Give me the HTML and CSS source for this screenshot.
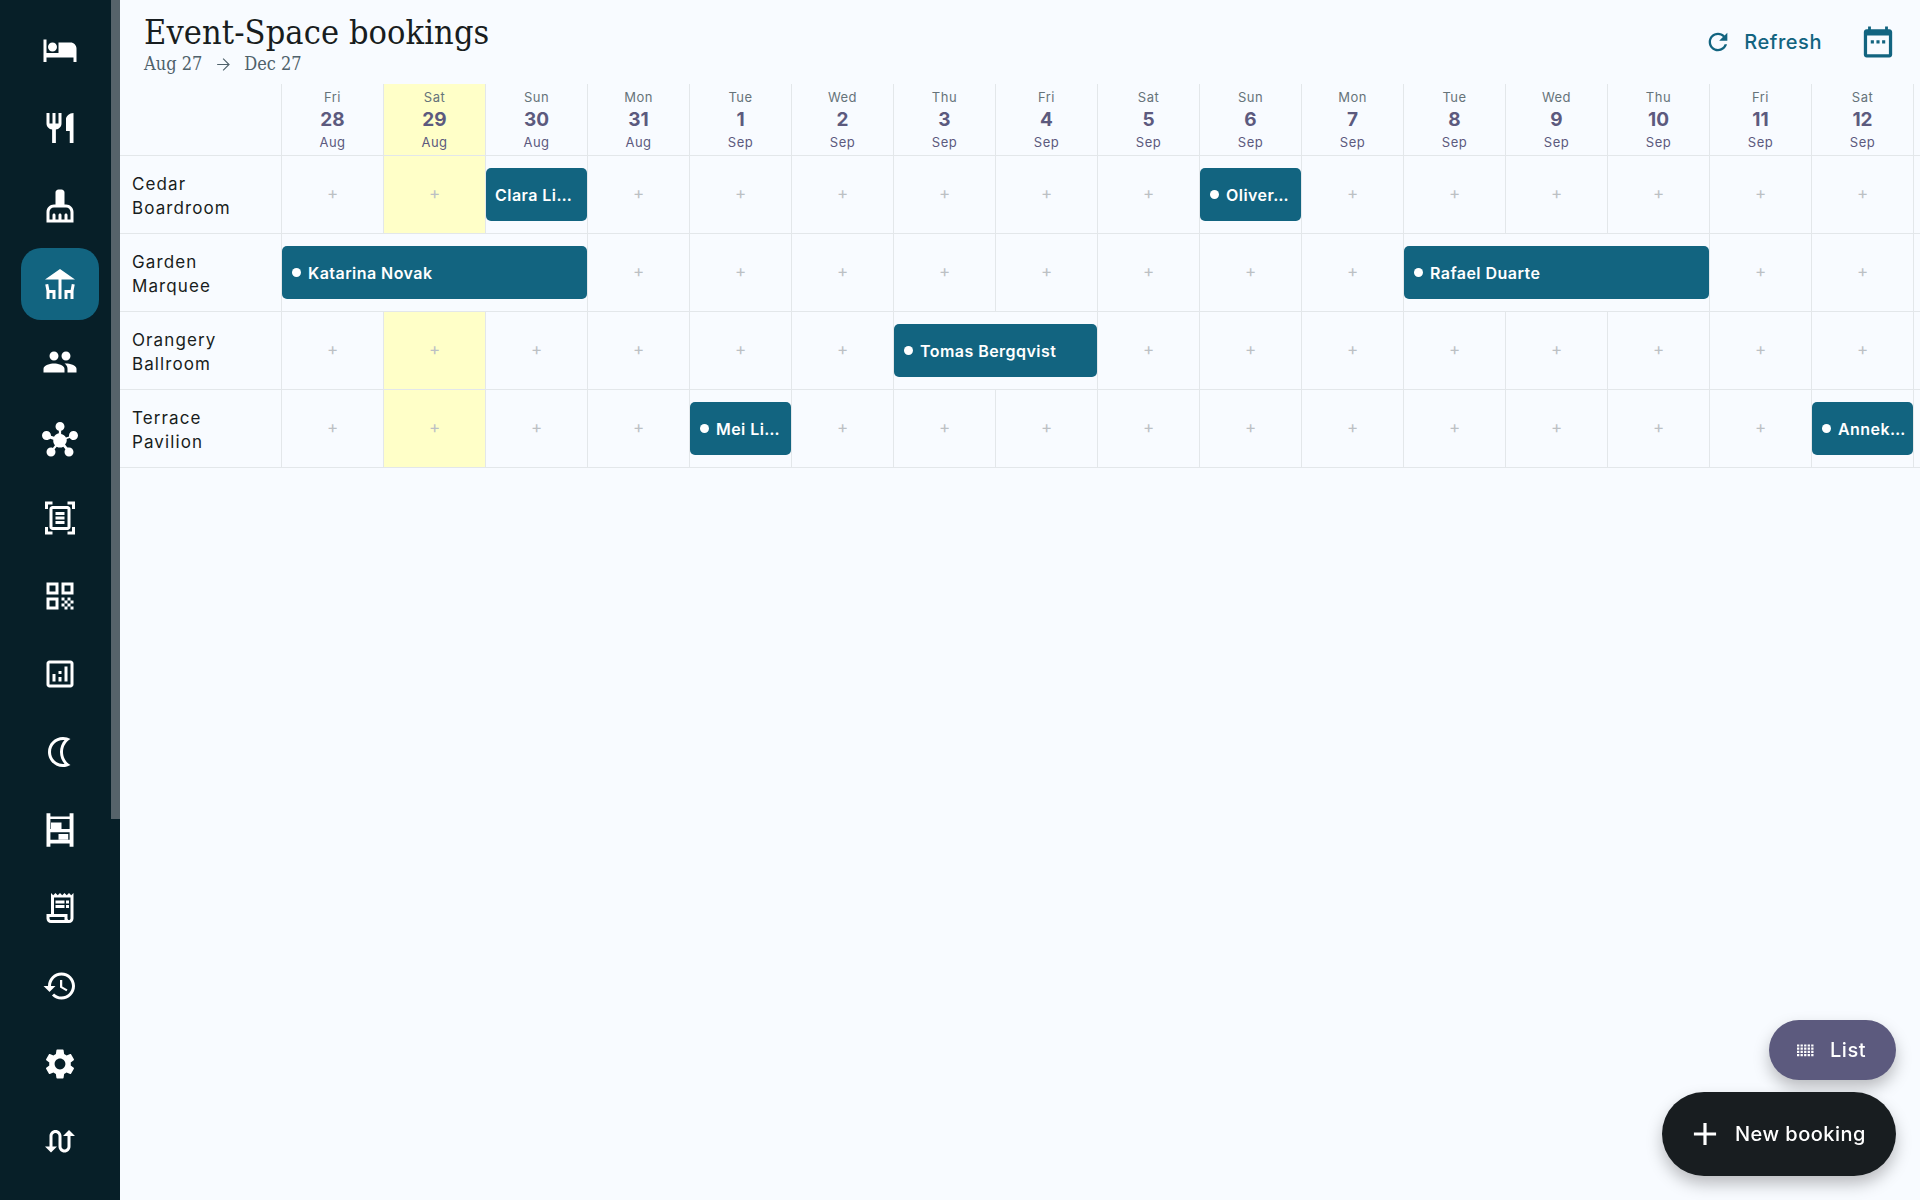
FILE: index.html
```html
<!DOCTYPE html>
<html lang="en">
<head>
    <meta charset="UTF-8">
    <meta name="viewport" content="width=device-width, initial-scale=1.0">
    <title>Event-Space bookings</title>
    <link rel="stylesheet" href="styles.css">
</head>
<body>
    <nav class="sidebar">
        <div class="navItem"><svg class="navIcon" viewBox="0 0 24 24"><path d="M7 13c1.66 0 3-1.34 3-3S8.66 7 7 7s-3 1.34-3 3 1.34 3 3 3zm12-6h-8v7H3V5H1v15h2v-3h18v3h2v-9c0-2.21-1.79-4-4-4z"/></svg></div>
        <div class="navItem"><svg class="navIcon" viewBox="0 0 24 24"><path d="M11 9H9V2H7v7H5V2H3v7c0 2.12 1.66 3.84 3.75 3.97V22h2.5v-9.03C11.34 12.84 13 11.12 13 9V2h-2v7zm5-3v8h2.5v8H21V2c-2.76 0-5 2.24-5 4z"/></svg></div>
        <div class="navItem"><svg class="navIcon" viewBox="0 0 24 24"><path d="M16 11h-1V3c0-1.1-.9-2-2-2h-2c-1.1 0-2 .9-2 2v8H8c-2.76 0-5 2.24-5 5v7h18v-7c0-2.76-2.24-5-5-5zm3 10h-2v-3c0-.55-.45-1-1-1s-1 .45-1 1v3h-2v-3c0-.55-.45-1-1-1s-1 .45-1 1v3H9v-3c0-.55-.45-1-1-1s-1 .45-1 1v3H5v-5c0-1.65 1.35-3 3-3h8c1.65 0 3 1.35 3 3v5z"/></svg></div>
        <div class="navItem active"><svg class="navIcon" viewBox="0 0 24 24"><path d="M22 9L12 2 2 9h9v13h2V9z"/><path d="M4.14 12l-1.96.37.82 4.37V22h2l.02-4H7v4h2v-6H4.9zM19.1 16H15v6h2v-4h1.98l.02 4h2v-5.26l.82-4.37-1.96-.37z"/></svg></div>
        <div class="navItem"><svg class="navIcon" viewBox="0 0 24 24"><path d="M16 11c1.66 0 2.99-1.34 2.99-3S17.66 5 16 5c-1.66 0-3 1.34-3 3s1.34 3 3 3zm-8 0c1.66 0 2.99-1.34 2.99-3S9.66 5 8 5C6.34 5 5 6.34 5 8s1.34 3 3 3zm0 2c-2.33 0-7 1.17-7 3.5V19h14v-2.5c0-2.33-4.67-3.5-7-3.5zm8 0c-.29 0-.62.02-.97.05 1.16.84 1.97 1.97 1.97 3.45V19h6v-2.5c0-2.33-4.67-3.5-7-3.5z"/></svg></div>
        <div class="navItem"><svg class="navIcon" viewBox="0 0 24 24"><path d="M8.4 18.2c.38.5.6 1.12.6 1.8 0 1.66-1.34 3-3 3s-3-1.34-3-3 1.34-3 3-3c.44 0 .85.09 1.23.26l1.41-1.77c-.92-1.03-1.29-2.39-1.09-3.69l-2.03-.68C4.98 11.45 4.06 12 3 12c-1.66 0-3-1.34-3-3s1.34-3 3-3 3 1.34 3 3c0 .07 0 .14-.01.21l2.03.68c.64-1.21 1.82-2.09 3.22-2.32V5.91C9.96 5.57 9 4.4 9 3c0-1.66 1.34-3 3-3s3 1.34 3 3c0 1.4-.96 2.57-2.25 2.91v2.16c1.4.23 2.58 1.11 3.22 2.32l2.03-.68C18 9.14 18 9.07 18 9c0-1.66 1.34-3 3-3s3 1.34 3 3-1.34 3-3 3c-1.06 0-1.98-.55-2.52-1.37l-2.03.68c.2 1.29-.16 2.65-1.09 3.69l1.41 1.77C17.15 17.09 17.56 17 18 17c1.66 0 3 1.34 3 3s-1.34 3-3 3-3-1.34-3-3c0-.68.22-1.3.6-1.8l-1.41-1.77c-1.35.75-3.01.76-4.38 0L8.4 18.2z"/></svg></div>
        <div class="navItem"><svg class="navIcon" viewBox="0 0 24 24"><path d="M7 3H4v3H2V1h5v2zm15 3V1h-5v2h3v3h2zM7 21H4v-3H2v5h5v-2zm13-3v3h-3v2h5v-5h-2zM19 18c0 1.1-.9 2-2 2H7c-1.1 0-2-.9-2-2V6c0-1.1.9-2 2-2h10c1.1 0 2 .9 2 2v12zM17 6H7v12h10V6zM9 8h6v2H9zm0 3h6v2H9zm0 3h6v2H9z"/></svg></div>
        <div class="navItem"><svg class="navIcon" viewBox="0 0 24 24"><path d="M3 11h8V3H3v8zm2-6h4v4H5V5zM3 21h8v-8H3v8zm2-6h4v4H5v-4zM13 3v8h8V3h-8zm6 6h-4V5h4v4zM19 19h2v2h-2zM13 13h2v2h-2zM15 15h2v2h-2zM13 17h2v2h-2zM15 19h2v2h-2zM17 17h2v2h-2zM17 13h2v2h-2zM19 15h2v2h-2z"/></svg></div>
        <div class="navItem"><svg class="navIcon" viewBox="0 0 24 24"><path d="M19 3H5c-1.1 0-2 .9-2 2v14c0 1.1.9 2 2 2h14c1.1 0 2-.9 2-2V5c0-1.1-.9-2-2-2zm0 16H5V5h14v14zM9 17H7v-5h2v5zm4 0h-2v-3h2v3zm0-5h-2v-2h2v2zm4 5h-2V7h2v10z"/></svg></div>
        <div class="navItem"><svg class="navIcon" viewBox="0 0 24 24"><path d="M14 4c.34 0 .68.02 1.01.07C13.1 6.23 12 9.05 12 12s1.1 5.77 3.01 7.93c-.33.05-.67.07-1.01.07-4.41 0-8-3.59-8-8s3.59-8 8-8m0-2C8.48 2 4 6.48 4 12s4.48 10 10 10c1.82 0 3.53-.5 5-1.35-2.99-1.73-5-4.95-5-8.65s2.01-6.92 5-8.65C17.53 2.5 15.82 2 14 2z"/></svg></div>
        <div class="navItem"><svg class="navIcon" viewBox="0 0 24 24"><path d="M3 .8h2.6v2.2h12.8V.8H21v22.4h-2.6V21H5.600v2.200H3zM5.600 4.700v6.600h12.800V4.700zM5.600 13.500v5h12.800v-5z"/><path d="M6 7h7v4.300H6zM11 14.700h6.500v3.800H11z"/></svg></div>
        <div class="navItem"><svg class="navIcon" viewBox="0 0 24 24"><path d="M19.500 3.500L18 2l-1.500 1.500L15 2l-1.500 1.500L12 2l-1.500 1.500L9 2 7.500 3.500 6 2v14H3v3c0 1.660 1.340 3 3 3h12c1.660 0 3-1.340 3-3V2l-1.500 1.500zM15 20H6c-.55 0-1-.45-1-1v-1h10v2zm4-1c0 .55-.45 1-1 1s-1-.45-1-1v-3H8V5h11v14z"/><path d="M9 7h6v2H9zm7 0h2v2h-2zM9 10h6v2H9zm7 0h2v2h-2z"/></svg></div>
        <div class="navItem"><svg class="navIcon" viewBox="0 0 24 24"><path d="M13 3c-4.970 0-9 4.030-9 9H1l3.890 3.890.07.14L9 12H6c0-3.870 3.130-7 7-7s7 3.130 7 7-3.130 7-7 7c-1.930 0-3.680-.79-4.940-2.060l-1.420 1.420C8.270 19.990 10.510 21 13 21c4.970 0 9-4.030 9-9s-4.030-9-9-9zm-1 5v5l4.280 2.540.72-1.210-3.500-2.080V8H12z"/></svg></div>
        <div class="navItem"><svg class="navIcon" viewBox="0 0 24 24"><path d="M19.140 12.940c.04-.3.06-.61.06-.94 0-.32-.02-.64-.07-.94l2.030-1.580c.18-.14.23-.41.12-.61l-1.920-3.320c-.12-.22-.37-.29-.59-.22l-2.390.96c-.5-.38-1.030-.7-1.620-.94l-.36-2.540c-.04-.24-.24-.41-.48-.41h-3.840c-.24 0-.43.17-.47.41l-.36 2.540c-.59.24-1.130.57-1.620.94l-2.390-.96c-.22-.08-.47 0-.59.22L2.740 8.870c-.12.21-.08.47.12.61l2.030 1.580c-.05.3-.09.63-.09.94s.02.64.07.94l-2.030 1.580c-.18.14-.23.41-.12.61l1.920 3.320c.12.22.37.29.59.22l2.390-.96c.5.38 1.030.7 1.620.94l.36 2.540c.05.24.24.41.48.41h3.840c.24 0 .44-.17.47-.41l.36-2.540c.59-.24 1.130-.56 1.620-.94l2.390.96c.22.08.47 0 .59-.22l1.920-3.320c.12-.22.07-.47-.12-.61l-2.010-1.580zM12 15.600c-1.980 0-3.600-1.620-3.600-3.600s1.620-3.600 3.600-3.600 3.600 1.620 3.600 3.600-1.620 3.600-3.600 3.600z"/></svg></div>
        <div class="navItem"><svg class="navIcon" viewBox="0 0 24 24"><path d="M18 4l-4 4h3v7c0 1.100-.9 2-2 2s-2-.9-2-2V8c0-2.210-1.790-4-4-4S5 5.790 5 8v7H2l4 4 4-4H7V8c0-1.100.9-2 2-2s2 .9 2 2v7c0 2.210 1.790 4 4 4s4-1.790 4-4V8h3l-4-4z"/></svg></div>
        <div class="sidebarThumb"></div>
    </nav>

    <main class="content">
        <header class="topBar">
            <div class="heading">
                <h1 class="title">Event-Space bookings</h1>
                <div class="dateRange">
                    <span>Aug 27</span>
                    <svg class="arrowIcon" viewBox="0 0 24 24"><path d="M12 4l-1 1 6.200 6.300H4v1.400h13.200L11 19l1 1 8-8z"/></svg>
                    <span>Dec 27</span>
                </div>
            </div>
            <div class="topActions">
                <div class="refresh">
                    <svg class="refreshIcon" viewBox="0 0 24 24"><path d="M17.650 6.350C16.200 4.900 14.210 4 12 4c-4.420 0-7.990 3.580-7.990 8s3.570 8 7.990 8c3.730 0 6.840-2.550 7.730-6h-2.080c-.82 2.330-3.040 4-5.650 4-3.310 0-6-2.690-6-6s2.690-6 6-6c1.660 0 3.140.69 4.220 1.780L13 11h7V4l-2.350 2.350z"/></svg>
                    <span>Refresh</span>
                </div>
                <svg class="calendarIcon" viewBox="0 0 24 24"><path d="M20 3h-1V1h-2v2H7V1H5v2H4c-1.100 0-2 .9-2 2v16c0 1.100.9 2 2 2h16c1.100 0 2-.9 2-2V5c0-1.100-.9-2-2-2zm-.3 17.600H4.300V7.400h15.400z"/><path d="M6.900 10.800h2.200V13H6.900zm4 0h2.200V13h-2.200zm4 0h2.200V13h-2.200z"/></svg>
            </div>
        </header>

        <div class="schedule">
            <div class="corner"></div>
            <div class="dayHead"><span class="dayName">Fri</span><span class="dayNum">28</span><span class="dayMonth">Aug</span></div>
            <div class="dayHead today"><span class="dayName">Sat</span><span class="dayNum">29</span><span class="dayMonth">Aug</span></div>
            <div class="dayHead"><span class="dayName">Sun</span><span class="dayNum">30</span><span class="dayMonth">Aug</span></div>
            <div class="dayHead"><span class="dayName">Mon</span><span class="dayNum">31</span><span class="dayMonth">Aug</span></div>
            <div class="dayHead"><span class="dayName">Tue</span><span class="dayNum">1</span><span class="dayMonth">Sep</span></div>
            <div class="dayHead"><span class="dayName">Wed</span><span class="dayNum">2</span><span class="dayMonth">Sep</span></div>
            <div class="dayHead"><span class="dayName">Thu</span><span class="dayNum">3</span><span class="dayMonth">Sep</span></div>
            <div class="dayHead"><span class="dayName">Fri</span><span class="dayNum">4</span><span class="dayMonth">Sep</span></div>
            <div class="dayHead"><span class="dayName">Sat</span><span class="dayNum">5</span><span class="dayMonth">Sep</span></div>
            <div class="dayHead"><span class="dayName">Sun</span><span class="dayNum">6</span><span class="dayMonth">Sep</span></div>
            <div class="dayHead"><span class="dayName">Mon</span><span class="dayNum">7</span><span class="dayMonth">Sep</span></div>
            <div class="dayHead"><span class="dayName">Tue</span><span class="dayNum">8</span><span class="dayMonth">Sep</span></div>
            <div class="dayHead"><span class="dayName">Wed</span><span class="dayNum">9</span><span class="dayMonth">Sep</span></div>
            <div class="dayHead"><span class="dayName">Thu</span><span class="dayNum">10</span><span class="dayMonth">Sep</span></div>
            <div class="dayHead"><span class="dayName">Fri</span><span class="dayNum">11</span><span class="dayMonth">Sep</span></div>
            <div class="dayHead"><span class="dayName">Sat</span><span class="dayNum">12</span><span class="dayMonth">Sep</span></div>
            <div class="dayHead"></div>

            <!-- Cedar Boardroom -->
            <div class="room">Cedar<br>Boardroom</div>
            <div class="cell">+</div>
            <div class="cell today">+</div>
            <div class="cell slot"><div class="booking"><span>Clara Li…</span></div></div>
            <div class="cell">+</div>
            <div class="cell">+</div>
            <div class="cell">+</div>
            <div class="cell">+</div>
            <div class="cell">+</div>
            <div class="cell">+</div>
            <div class="cell slot"><div class="booking"><i class="dot"></i><span>Oliver…</span></div></div>
            <div class="cell">+</div>
            <div class="cell">+</div>
            <div class="cell">+</div>
            <div class="cell">+</div>
            <div class="cell">+</div>
            <div class="cell">+</div>
            <div class="cell"></div>

            <!-- Garden Marquee -->
            <div class="room">Garden<br>Marquee</div>
            <div class="cell slot span3"><div class="booking"><i class="dot"></i><span>Katarina Novak</span></div></div>
            <div class="cell">+</div>
            <div class="cell">+</div>
            <div class="cell">+</div>
            <div class="cell">+</div>
            <div class="cell">+</div>
            <div class="cell">+</div>
            <div class="cell">+</div>
            <div class="cell">+</div>
            <div class="cell slot span3"><div class="booking"><i class="dot"></i><span>Rafael Duarte</span></div></div>
            <div class="cell">+</div>
            <div class="cell">+</div>
            <div class="cell"></div>

            <!-- Orangery Ballroom -->
            <div class="room">Orangery<br>Ballroom</div>
            <div class="cell">+</div>
            <div class="cell today">+</div>
            <div class="cell">+</div>
            <div class="cell">+</div>
            <div class="cell">+</div>
            <div class="cell">+</div>
            <div class="cell slot span2"><div class="booking"><i class="dot"></i><span>Tomas Bergqvist</span></div></div>
            <div class="cell">+</div>
            <div class="cell">+</div>
            <div class="cell">+</div>
            <div class="cell">+</div>
            <div class="cell">+</div>
            <div class="cell">+</div>
            <div class="cell">+</div>
            <div class="cell">+</div>
            <div class="cell"></div>

            <!-- Terrace Pavilion -->
            <div class="room">Terrace<br>Pavilion</div>
            <div class="cell">+</div>
            <div class="cell today">+</div>
            <div class="cell">+</div>
            <div class="cell">+</div>
            <div class="cell slot"><div class="booking"><i class="dot"></i><span>Mei Li…</span></div></div>
            <div class="cell">+</div>
            <div class="cell">+</div>
            <div class="cell">+</div>
            <div class="cell">+</div>
            <div class="cell">+</div>
            <div class="cell">+</div>
            <div class="cell">+</div>
            <div class="cell">+</div>
            <div class="cell">+</div>
            <div class="cell">+</div>
            <div class="cell slot"><div class="booking"><i class="dot"></i><span>Annek…</span></div></div>
            <div class="cell"></div>
        </div>
    </main>

    <div class="fabs">
        <div class="fab fabList">
            <svg class="listIcon" viewBox="0 0 17 13"><path d="M0 1.500H17M0 4.700H17M0 7.900H17M0 11.100H17"/></svg>
            <span>List</span>
        </div>
        <div class="fab fabNew">
            <svg class="plusIcon" viewBox="0 0 24 24"><path d="M19 13h-6v6h-2v-6H5v-2h6V5h2v6h6v2z"/></svg>
            <span>New booking</span>
        </div>
    </div>
</body>
</html>
```

FILE: styles.css
```css
body {
    margin: 0;
    padding: 0;
    height: 1200px;
    display: flex;
    overflow: hidden;
    background-color: #f8fbff;
    font-family: Inter, "Liberation Sans", sans-serif;
    color: #181d20;
}

/* sidebar */
.sidebar {
    position: relative;
    flex: 0 0 120px;
    box-sizing: border-box;
    padding-top: 14px;
    background-color: #071f28;
    display: flex;
    flex-direction: column;
    align-items: center;
}
.navItem {
    flex: none;
    width: 78px;
    height: 72px;
    margin-bottom: 6px;
    border-radius: 20px;
    display: flex;
    justify-content: center;
    align-items: center;
}
.navItem.active {
    background-color: #126480;
}
.navIcon {
    width: 36px;
    height: 36px;
    fill: white;
}
.sidebarThumb {
    position: absolute;
    top: 0;
    right: 0;
    width: 9px;
    height: 819px;
    background-color: #56636a;
}

/* header */
.content {
    flex: 1;
    min-width: 0;
    overflow: hidden;
}
.topBar {
    height: 84px;
    box-sizing: border-box;
    padding: 12px 25px 0 24px;
    display: flex;
    justify-content: space-between;
}
.title {
    margin: 0;
    font-family: "DejaVu Serif Condensed", "DejaVu Serif", serif;
    font-size: 34px;
    font-weight: 400;
    line-height: 40px;
    letter-spacing: 0.1px;
    color: #181d20;
}
.dateRange {
    display: flex;
    align-items: center;
    gap: 10px;
    margin-top: 1px;
    font-family: "DejaVu Serif Condensed", "DejaVu Serif", serif;
    font-size: 18px;
    line-height: 22px;
    color: #4f616b;
}
.arrowIcon {
    width: 19px;
    height: 19px;
    margin: 0 1px 0 2px;
    fill: #4f616b;
}
.topActions {
    display: flex;
    align-items: flex-start;
    gap: 39px;
}
.refresh {
    display: flex;
    align-items: center;
    gap: 12px;
    height: 60px;
    color: #126480;
    font-size: 20px;
    font-weight: 500;
    letter-spacing: 0.55px;
}
.refreshIcon {
    width: 28px;
    height: 28px;
    fill: #126480;
}
.calendarIcon {
    width: 34px;
    height: 34px;
    margin-top: 13px;
    fill: #126480;
}

/* schedule grid */
.schedule {
    display: grid;
    grid-template-columns: 161px repeat(17, 102px);
    grid-auto-rows: 78px;
    grid-template-rows: 72px;
}
.corner,
.room,
.dayHead,
.cell {
    box-sizing: border-box;
    border-bottom: 1px solid #e3e7ea;
}
.dayHead,
.cell {
    border-left: 1px solid #e3e7ea;
}
.dayHead {
    display: flex;
    flex-direction: column;
    align-items: center;
    padding-top: 2px;
}
.today {
    background-color: #ffffc8;
}
.dayName {
    font-size: 13px;
    line-height: 23px;
    letter-spacing: 0.5px;
    color: #66737a;
}
.dayNum {
    font-size: 19px;
    font-weight: 700;
    line-height: 22px;
    color: #5c5a7e;
}
.dayMonth {
    font-size: 13px;
    line-height: 23px;
    letter-spacing: 0.5px;
    color: #5c5a7e;
}
.room {
    padding: 2px 0 0 12px;
    font-size: 17px;
    line-height: 24px;
    letter-spacing: 1.1px;
    display: flex;
    align-items: center;
}
.cell {
    display: flex;
    justify-content: center;
    align-items: center;
    padding-bottom: 4px;
    font-size: 17px;
    color: #bcc0c4;
}
.slot {
    padding-bottom: 0;
}
.span2 {
    grid-column: span 2;
}
.span3 {
    grid-column: span 3;
}
.booking {
    width: 100%;
    height: 53px;
    box-sizing: border-box;
    padding: 0 9px;
    border-radius: 5px;
    background-color: #126480;
    color: white;
    display: flex;
    align-items: center;
    gap: 7px;
    font-size: 16px;
    font-weight: 600;
    letter-spacing: 0.45px;
    white-space: nowrap;
}
.dot {
    flex: 0 0 9px;
    height: 9px;
    margin-left: 1px;
    border-radius: 50%;
    background-color: white;
}

/* floating buttons */
.fabs {
    position: fixed;
    right: 24px;
    bottom: 24px;
    display: flex;
    flex-direction: column;
    align-items: flex-end;
    gap: 12px;
}
.fab {
    display: flex;
    align-items: center;
    color: white;
    font-size: 20px;
    font-weight: 500;
    letter-spacing: 0.5px;
    box-shadow: 0 8px 16px rgba(0, 0, 0, 0.25);
}
.fabList {
    height: 60px;
    padding: 0 30px 0 28px;
    gap: 16px;
    border-radius: 30px;
    background-color: #5c5a7e;
}
.fabNew {
    height: 84px;
    padding: 0 30px 0 24px;
    gap: 11px;
    border-radius: 42px;
    background-color: #181d20;
}
.listIcon {
    width: 17px;
    height: 13px;
    stroke: white;
    stroke-width: 2.2;
    stroke-dasharray: 2.3 1.25;
    fill: none;
}
.plusIcon {
    width: 38px;
    height: 38px;
    fill: white;
}
```
